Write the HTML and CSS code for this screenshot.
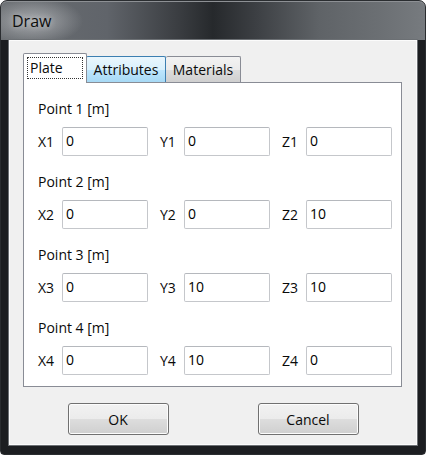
FILE: index.html
```html
<!DOCTYPE html>
<html>
<head>
<meta charset="utf-8">
<link rel="stylesheet" href="styles.css">
</head>
<body>
<div class="window">
  <div class="titlebar"><span class="title">Draw</span></div>
  <div class="client">
    <div class="tabs">
      <div class="tab tab-selected"><span class="focus">Plate</span></div>
      <div class="tab tab-hover tab-attr">Attributes</div>
      <div class="tab tab-mat">Materials</div>
    </div>
    <div class="panel">
      <div class="group">
        <div class="point">Point 1 [m]</div>
        <div class="row">
          <label class="field"><span class="lbl">X1</span><span class="input">0</span></label>
          <label class="field"><span class="lbl">Y1</span><span class="input">0</span></label>
          <label class="field"><span class="lbl">Z1</span><span class="input">0</span></label>
        </div>
      </div>
      <div class="group">
        <div class="point">Point 2 [m]</div>
        <div class="row">
          <label class="field"><span class="lbl">X2</span><span class="input">0</span></label>
          <label class="field"><span class="lbl">Y2</span><span class="input">0</span></label>
          <label class="field"><span class="lbl">Z2</span><span class="input">10</span></label>
        </div>
      </div>
      <div class="group">
        <div class="point">Point 3 [m]</div>
        <div class="row">
          <label class="field"><span class="lbl">X3</span><span class="input">0</span></label>
          <label class="field"><span class="lbl">Y3</span><span class="input">10</span></label>
          <label class="field"><span class="lbl">Z3</span><span class="input">10</span></label>
        </div>
      </div>
      <div class="group">
        <div class="point">Point 4 [m]</div>
        <div class="row">
          <label class="field"><span class="lbl">X4</span><span class="input">0</span></label>
          <label class="field"><span class="lbl">Y4</span><span class="input">10</span></label>
          <label class="field"><span class="lbl">Z4</span><span class="input">0</span></label>
        </div>
      </div>
    </div>
    <div class="buttons">
      <div class="btn">OK</div>
      <div class="btn">Cancel</div>
    </div>
  </div>
</div>
</body>
</html>
```

FILE: styles.css
```css
* { box-sizing: border-box; }
html, body {
  margin: 0;
  padding: 0;
  background: #ffffff;
}
body {
  font-family: "Open Sans", "Noto Sans", sans-serif;
  font-size: 14px;
  color: #0a0a0a;
}
.window {
  width: 426px;
  height: 455px;
  border: 1px solid #2a2d30;
  border-radius: 7px 7px 4px 4px;
  display: flex;
  flex-direction: column;
  padding: 0 8px 9px 8px;
  background:
    linear-gradient(to bottom, rgba(0,0,0,0) 39px, #1c1e21 39px),
    radial-gradient(ellipse 50px 24px at 32px 20px, rgba(210,212,215,0.6), rgba(210,212,215,0) 100%),
    linear-gradient(to right, #6a6e72 0%, #60646a 25%, #3a3d41 42%, #26292c 50%, #3c3f43 60%, #5f6367 75%, #6c7074 90%, #777b7f 100%);
  box-shadow: inset 0 1px 0 #8d9094;
}
.titlebar {
  height: 39px;
  display: flex;
  align-items: center;
  padding-left: 3px;
}
.title {
  font-size: 16px;
  color: #0e0e0e;
  text-shadow: 0 0 6px rgba(235,235,235,0.6);
  margin-top: 1px;
}
.client {
  flex: 1;
  background: #f0f0f0;
  border: 1px solid #fbfbfb;
  box-shadow: 0 0 0 1px #6c7074;
  padding: 12px 0 0 13px;
  display: flex;
  flex-direction: column;
}
.tabs {
  display: flex;
  align-items: flex-end;
  height: 30px;
  margin-bottom: -1px;
}
.tab {
  height: 26px;
  margin-bottom: 1px;
  border: 1px solid #898c95;
  border-bottom: none;
  border-left: none;
  display: flex;
  align-items: center;
  justify-content: center;
  border-radius: 2px 2px 0 0;
  background: linear-gradient(to bottom, #f2f2f2 0%, #ebebeb 50%, #dddddd 51%, #cfcfcf 100%);
  color: #0a0a0a;
}
.tab-selected {
  height: 30px;
  margin-bottom: 0;
  width: 64px;
  background: #ffffff;
  border-left: 1px solid #898c95;
  border-right: 1px solid #898c95;
  position: relative;
  z-index: 1;
  justify-content: flex-start;
  padding-left: 3px;
  align-items: flex-start;
  padding-top: 3px;
}
.focus {
  border: 1px dotted #333;
  width: 56px;
  height: 22px;
  line-height: 19px;
  padding-left: 2px;
}
.tab-attr {
  width: 80px;
  border-color: #3c7fb1;
  border-left: 1px solid #3c7fb1;
  margin-left: -1px;
  background: linear-gradient(to bottom, #eaf6fd 0%, #d9f0fc 50%, #bee6fd 51%, #a7d9f5 100%);
  padding-left: 0;
}
.tab-mat {
  width: 75px;
}
.panel {
  width: 379px;
  height: 305px;
  background: #ffffff;
  border: 1px solid #898c95;
  padding: 16px 0 0 14px;
  display: flex;
  flex-direction: column;
  gap: 16px;
}
.group {
  display: flex;
  flex-direction: column;
  gap: 8px;
}
.point {
  height: 20px;
  line-height: 20px;
}
.row {
  display: flex;
  gap: 12px;
}
.field {
  display: flex;
  align-items: center;
  width: 110px;
}
.lbl {
  width: 24px;
  line-height: 20px;
  padding-top: 1px;
}
.input {
  width: 86px;
  height: 29px;
  border: 1px solid #c5c7cb;
  border-top-color: #b5b8bd;
  border-radius: 2px;
  background: #fff;
  padding: 3px 0 0 3px;
  line-height: 20px;
  color: #000;
}
.buttons {
  display: flex;
  justify-content: center;
  gap: 89px;
  margin-top: 16px;
  margin-left: -13px;
}
.btn {
  width: 101px;
  height: 32px;
  border: 1px solid #707070;
  border-radius: 3px;
  background: linear-gradient(to bottom, #f2f2f2 0%, #ebebeb 50%, #dddddd 51%, #cfcfcf 100%);
  box-shadow: inset 0 0 0 1px #fcfcfc;
  display: flex;
  align-items: center;
  justify-content: center;
  color: #0a0a0a;
}
```
